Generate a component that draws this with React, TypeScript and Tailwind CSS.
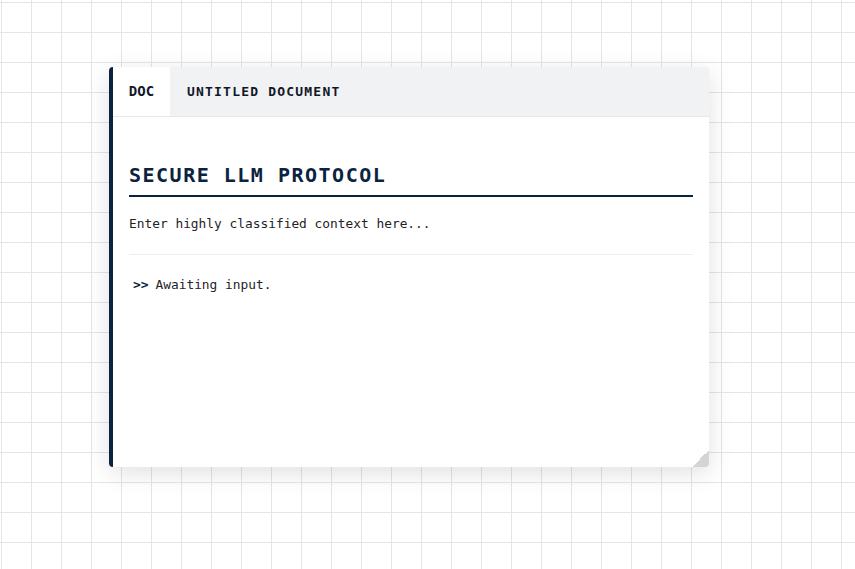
import React from 'react';

const mono = { fontFamily: '"DejaVu Sans Mono", "Liberation Mono", monospace' };

export default function App() {
  return (
    <div
      className="w-[855px] h-[569px] bg-white bg-[linear-gradient(to_right,#e4e5e7_1px,transparent_1px),linear-gradient(to_bottom,#e4e5e7_1px,transparent_1px)] bg-[size:30px_30px] bg-[position:1px_2px] pt-[67px] pl-[109px]"
      style={mono}
    >
      <div className="relative w-[600px] h-[400px] bg-white rounded-[4px] border-l-4 border-[#0b2340] shadow-[0_6px_24px_rgba(0,0,0,0.12)] flex flex-col overflow-hidden">
        <div className="flex h-[50px] bg-[#f1f2f4] border-b border-[#e6e7ea]">
          <div className="w-[57px] bg-white flex items-center justify-center text-[14px] font-semibold text-[#111827]">
            DOC
          </div>
          <div className="flex items-center pl-[17px] text-[13px] font-bold tracking-[1.2px] text-[#111827]">
            UNTITLED DOCUMENT
          </div>
        </div>
        <div className="px-4 pt-[45px]">
          <h1 className="text-[20px] leading-[26px] font-bold tracking-[1.5px] text-[#0b2340] pb-[7px] border-b-2 border-[#0b2340]">
            SECURE LLM PROTOCOL
          </h1>
          <p className="mt-[18px] text-[12.85px] leading-[18px] text-[#1f2328]">
            Enter highly classified context here...
          </p>
          <div className="mt-[21px] border-t border-[#eeeff1]" />
          <div className="mt-[21px] pl-[4px] flex gap-[7px] text-[12.85px] leading-[18px] text-[#1f2328]">
            <span className="font-bold text-[#0b2340]">&gt;&gt;</span>
            <span>Awaiting input.</span>
          </div>
        </div>
        <div className="absolute right-0 bottom-0 w-[17px] h-[17px] bg-[linear-gradient(135deg,transparent_50%,#d4d5d8_50%)]" />
      </div>
    </div>
  );
}
